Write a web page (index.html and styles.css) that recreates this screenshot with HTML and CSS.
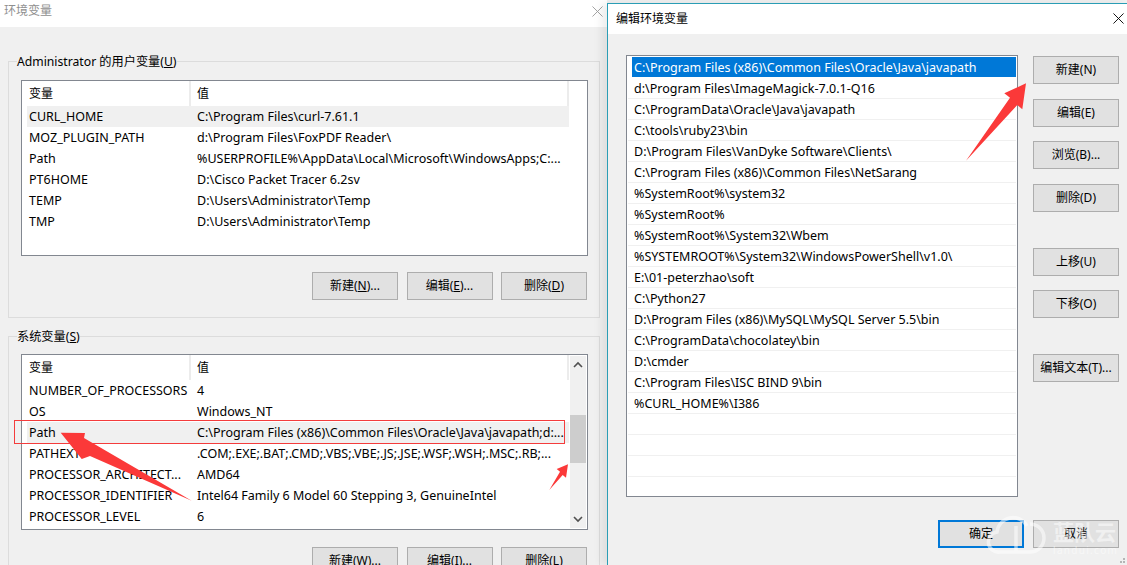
FILE: index.html
```html
<!DOCTYPE html>
<html lang="zh-CN">
<head>
<meta charset="utf-8">
<title>环境变量</title>
<link rel="stylesheet" href="styles.css">
</head>
<body>
<div class="desktop">
  <section class="window window-back">
    <header class="titlebar titlebar-back">
      <span class="title">环境变量</span>
      <svg class="close" viewBox="0 0 12 12"><path d="M.5.5l11 11M11.500.5l-11 11"/></svg>
    </header>
    <div class="window-body">
      <fieldset class="group">
        <legend>Administrator 的用户变量(<u>U</u>)</legend>
        <div class="listview">
          <div class="table">
            <div class="row head"><span class="name">变量</span><span class="value">值</span></div>
            <div class="row hot"><span class="name">CURL_HOME</span><span class="value">C:\Program Files\curl-7.61.1</span></div>
            <div class="row"><span class="name">MOZ_PLUGIN_PATH</span><span class="value">d:\Program Files\FoxPDF Reader\</span></div>
            <div class="row"><span class="name">Path</span><span class="value">%USERPROFILE%\AppData\Local\Microsoft\WindowsApps;C:...</span></div>
            <div class="row"><span class="name">PT6HOME</span><span class="value">D:\Cisco Packet Tracer 6.2sv</span></div>
            <div class="row"><span class="name">TEMP</span><span class="value">D:\Users\Administrator\Temp</span></div>
            <div class="row"><span class="name">TMP</span><span class="value">D:\Users\Administrator\Temp</span></div>
          </div>
        </div>
        <div class="actions">
          <button class="btn">新建(<u>N</u>)...</button>
          <button class="btn">编辑(<u>E</u>)...</button>
          <button class="btn">删除(<u>D</u>)</button>
        </div>
      </fieldset>
      <fieldset class="group group-system">
        <legend>系统变量(<u>S</u>)</legend>
        <div class="listview">
          <div class="table">
            <div class="row head"><span class="name">变量</span><span class="value">值</span></div>
            <div class="row"><span class="name">NUMBER_OF_PROCESSORS</span><span class="value">4</span></div>
            <div class="row"><span class="name">OS</span><span class="value">Windows_NT</span></div>
            <div class="row hot"><span class="name">Path</span><span class="value">C:\Program Files (x86)\Common Files\Oracle\Java\javapath;d:...</span></div>
            <div class="row"><span class="name">PATHEXT</span><span class="value">.COM;.EXE;.BAT;.CMD;.VBS;.VBE;.JS;.JSE;.WSF;.WSH;.MSC;.RB;...</span></div>
            <div class="row"><span class="name">PROCESSOR_ARCHITECT...</span><span class="value">AMD64</span></div>
            <div class="row"><span class="name">PROCESSOR_IDENTIFIER</span><span class="value">Intel64 Family 6 Model 60 Stepping 3, GenuineIntel</span></div>
            <div class="row"><span class="name">PROCESSOR_LEVEL</span><span class="value">6</span></div>
          </div>
          <div class="scrollbar">
            <svg class="chevron" viewBox="0 0 16 17"><path d="M4 11l4-4 4 4"/></svg>
            <div class="track"><div class="thumb"></div></div>
            <svg class="chevron" viewBox="0 0 16 17"><path d="M4 6l4 4 4-4"/></svg>
          </div>
        </div>
        <div class="actions">
          <button class="btn">新建(<u>W</u>)...</button>
          <button class="btn">编辑(<u>I</u>)...</button>
          <button class="btn">删除(<u>L</u>)</button>
        </div>
      </fieldset>
    </div>
  </section>

  <section class="window window-front">
    <header class="titlebar">
      <span class="title">编辑环境变量</span>
      <svg class="close close-front" viewBox="0 0 12 12"><path d="M.5.5l11 11M11.500.5l-11 11"/></svg>
    </header>
    <div class="edit-body">
      <div class="edit-main">
        <div class="pathlist">
          <div class="path selected"><span>C:\Program Files (x86)\Common Files\Oracle\Java\javapath</span></div>
          <div class="path"><span>d:\Program Files\ImageMagick-7.0.1-Q16</span></div>
          <div class="path"><span>C:\ProgramData\Oracle\Java\javapath</span></div>
          <div class="path"><span>C:\tools\ruby23\bin</span></div>
          <div class="path"><span>D:\Program Files\VanDyke Software\Clients\</span></div>
          <div class="path"><span>C:\Program Files (x86)\Common Files\NetSarang</span></div>
          <div class="path"><span>%SystemRoot%\system32</span></div>
          <div class="path"><span>%SystemRoot%</span></div>
          <div class="path"><span>%SystemRoot%\System32\Wbem</span></div>
          <div class="path"><span>%SYSTEMROOT%\System32\WindowsPowerShell\v1.0\</span></div>
          <div class="path"><span>E:\01-peterzhao\soft</span></div>
          <div class="path"><span>C:\Python27</span></div>
          <div class="path"><span>D:\Program Files (x86)\MySQL\MySQL Server 5.5\bin</span></div>
          <div class="path"><span>C:\ProgramData\chocolatey\bin</span></div>
          <div class="path"><span>D:\cmder</span></div>
          <div class="path"><span>C:\Program Files\ISC BIND 9\bin</span></div>
          <div class="path"><span>%CURL_HOME%\I386</span></div>
          <div class="path"></div>
          <div class="path"></div>
          <div class="path"></div>
        </div>
        <div class="side">
          <div class="stack">
            <button class="btn">新建(N)</button>
            <button class="btn">编辑(E)</button>
            <button class="btn">浏览(B)...</button>
            <button class="btn">删除(D)</button>
          </div>
          <div class="stack stack-tight">
            <button class="btn">上移(U)</button>
            <button class="btn">下移(O)</button>
          </div>
          <button class="btn">编辑文本(T)...</button>
        </div>
      </div>
      <footer class="edit-footer">
        <button class="btn btn-default">确定</button>
        <button class="btn">取消</button>
      </footer>
    </div>
  </section>

  <svg class="annotations" viewBox="0 0 1127 565">
    <rect class="callout" x="14.500" y="420.500" width="550" height="23"/>
    <polygon class="arrow" points="60.700,432.700 85,433 84,438 191.700,500.700 90,456 81.700,459"/>
    <polygon class="arrow" points="568,464.300 556.700,469 560,471.700 549.300,490 562.700,475 566,477.700"/>
    <polygon class="arrow" points="1026,83.300 1004.300,93.300 1010,97.700 966,160.700 1017.300,105 1022.300,109.300"/>
    <path class="cloud" d="M1016 552H1000a10 10 0 0 1-3-20 16 16 0 0 1 30-6M1016 526v26h14a14 14 0 0 0 0-28"/>
    <path class="grip" d="M1123 558h2v2h-2zM1120 561h2v2h-2zM1123 561h2v2h-2z"/>
  </svg>
  <div class="watermark">
    <span class="wm-name">蓝队云</span>
    <span class="wm-url">landui.com</span>
  </div>
</div>
</body>
</html>
```
FILE: styles.css
```css
* { box-sizing: border-box; }

html, body {
  margin: 0;
  height: 100%;
  overflow: hidden;
}

body {
  font: 12px/16px "Noto Sans", "Noto Sans CJK SC", sans-serif;
  color: #000;
  background: #f0f0f0;
}

.desktop {
  position: relative;
  width: 1127px;
  height: 565px;
  overflow: hidden;
}

.window {
  position: absolute;
  top: 0;
  background: #f0f0f0;
}

.window-back {
  left: 0;
  width: 607px;
  height: 620px;
}

.window-front {
  left: 607px;
  top: 3px;
  width: 520px;
  height: 562px;
  border-left: 1px solid #2a9db5;
  border-top: 1px solid #2a9db5;
  box-shadow: -6px 0 8px rgba(0, 0, 0, .07);
}

.titlebar {
  display: flex;
  align-items: center;
  justify-content: space-between;
  height: 30px;
  padding: 0 3px 0 8px;
  background: #fff;
}

.titlebar-back {
  height: 27px;
  padding: 0 4px 5px;
  color: #8f8f8f;
}

.close {
  width: 11px;
  height: 11px;
  fill: none;
  stroke: #9a9a9a;
}

.close-front {
  margin-bottom: 2px;
  stroke: #000;
}

.window-body {
  padding: 26px 7px 0 8px;
}

.group {
  margin: 0;
  padding: 11px 12px 0;
  width: 592px;
  height: 265px;
  min-width: 0;
  border: 1px solid #dcdcdc;
}

.group-system {
  margin-top: 10px;
  padding-top: 10px;
}

legend {
  margin-left: -4px;
  padding: 0;
  height: 16px;
  font-size: 12.200px;
  line-height: 18px;
  background: #f0f0f0;
}

.listview {
  display: flex;
  width: 567px;
  height: 176px;
  border: 1px solid #828790;
  background: #fff;
}

.table {
  width: 547px;
  padding-left: 5px;
}

.row {
  display: flex;
  width: 542px;
  height: 21px;
  align-items: center;
  font-size: 12.500px;
}

.row.head {
  height: 25px;
  font-size: 12px;
  border-right: 2px solid #ececec;
}

.row.hot {
  background: #f0f0f0;
}

.name {
  width: 164px;
  padding-left: 2px;
  white-space: nowrap;
  overflow: hidden;
}

.head .name {
  height: 100%;
  line-height: 25px;
  border-right: 2px solid #ececec;
}

.value {
  padding-left: 6px;
  white-space: nowrap;
}

.head .value {
  line-height: 27px;
}

.scrollbar {
  display: flex;
  flex-direction: column;
  width: 16px;
  margin: 1px 0 1px 1px;
  background: #f0f0f0;
}

.chevron {
  flex: none;
  width: 16px;
  height: 17px;
  fill: none;
  stroke: #505050;
  stroke-width: 1.600;
}

.track {
  flex: 1;
  padding-top: 42px;
}

.thumb {
  height: 48px;
  background: #cdcdcd;
}

.actions {
  display: flex;
  justify-content: flex-end;
  gap: 8.500px;
  width: 566px;
  margin-top: 16px;
}

.group-system .actions {
  margin-top: 17px;
}

.btn {
  flex: none;
  width: 86px;
  height: 28px;
  padding: 0;
  border: 1px solid #adadad;
  background: #e1e1e1;
  color: #000;
  font: inherit;
  white-space: nowrap;
}

.btn-default {
  border: 2px solid #0078d7;
}

.edit-body {
  padding: 21px 8px 0 18px;
}

.edit-main {
  display: flex;
  gap: 15px;
}

.pathlist {
  width: 392px;
  height: 442px;
  padding: 1px 1px 0;
  border: 1px solid #828790;
  background: #fff;
}

.path {
  height: 21px;
  padding-left: 4px;
  border-bottom: 1px solid #f0f0f0;
}

.path span {
  display: block;
  height: 20px;
  padding-left: 2px;
  font-size: 12.500px;
  line-height: 21px;
  white-space: nowrap;
}

.path.selected {
  border-bottom-color: #fff;
}

.path.selected span {
  background: #0078d7;
  color: #fff;
}

.side {
  display: flex;
  flex-direction: column;
  gap: 36px;
  padding-top: 1px;
}

.stack {
  display: flex;
  flex-direction: column;
  gap: 14.670px;
}

.stack-tight {
  gap: 14px;
}

.edit-footer {
  display: flex;
  justify-content: flex-end;
  gap: 9px;
  margin-top: 23px;
}

.annotations {
  position: absolute;
  inset: 0;
  width: 1127px;
  height: 565px;
  pointer-events: none;
}

.callout {
  fill: none;
  stroke: #f43c3c;
}

.arrow {
  fill: #fb3939;
}

.cloud {
  fill: none;
  stroke: #fff;
  stroke-width: 3.500;
  opacity: .55;
}

.grip {
  fill: #b5b5b5;
}

.watermark {
  position: absolute;
  left: 1053px;
  top: 519px;
  display: flex;
  flex-direction: column;
  align-items: flex-start;
  color: #fff;
  opacity: .5;
}

.wm-name {
  font-size: 21px;
  line-height: 26px;
  font-weight: 700;
}

.wm-url {
  font-size: 10px;
  line-height: 10px;
  letter-spacing: 1.300px;
}
```
